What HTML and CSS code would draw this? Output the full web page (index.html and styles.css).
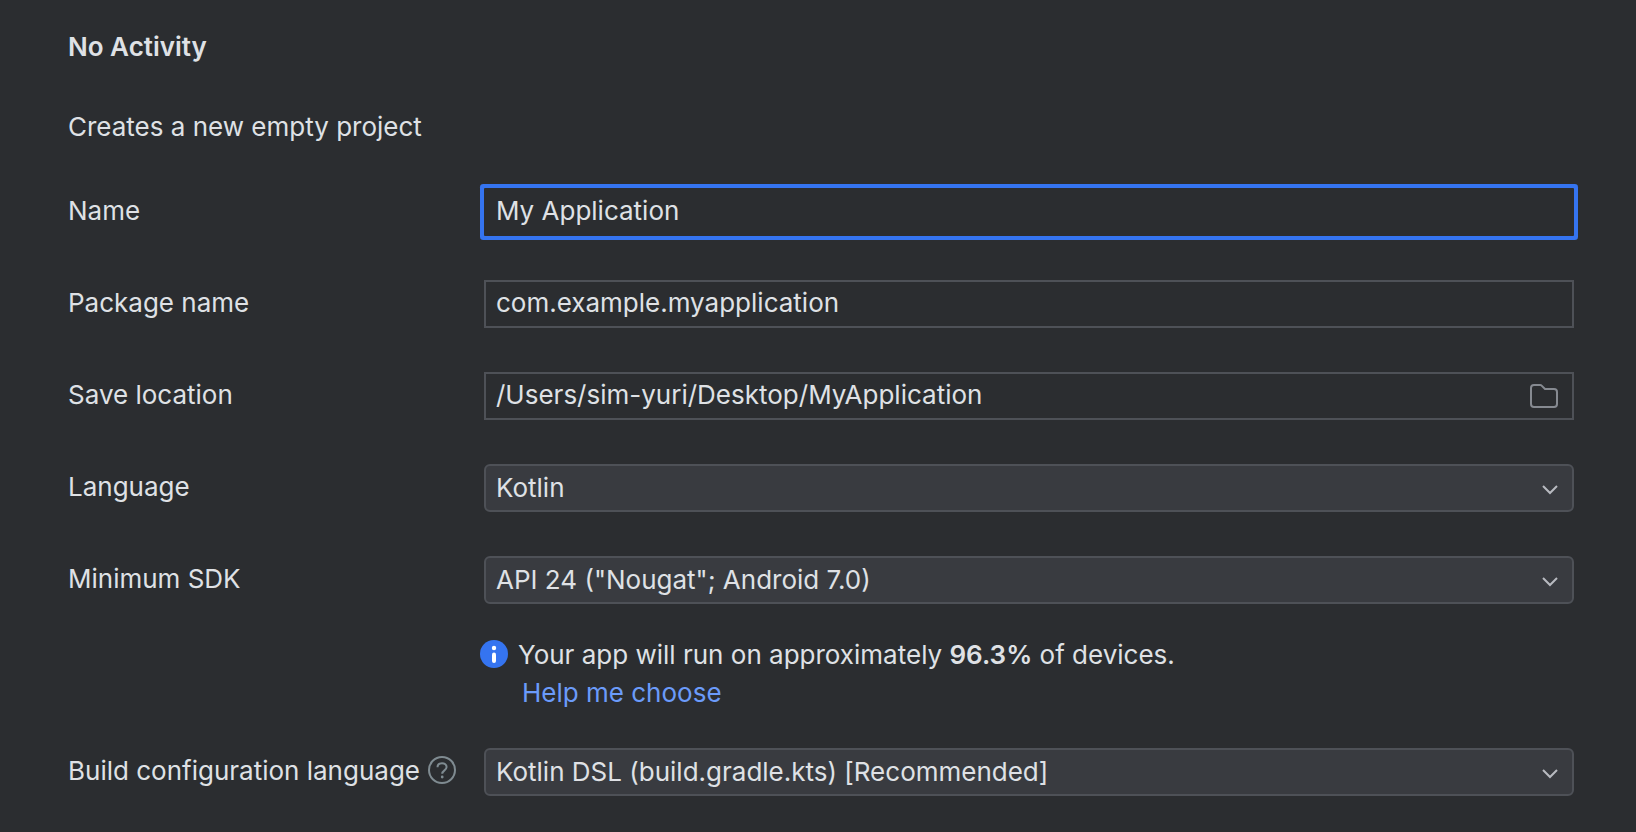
FILE: index.html
```
<!DOCTYPE html>
<html lang="en">

<head>
    <meta charset="UTF-8">
    <meta name="viewport" content="width=device-width, initial-scale=1.0">
    <title>New Project</title>
    <link rel="stylesheet" href="styles.css">
</head>

<body>
    <form class="project-form">
        <h1>No Activity</h1>
        <p class="description">Creates a new empty project</p>
        <div class="form-row">
            <label for="name">Name</label>
            <input class="field active" type="text" id="name" value="My Application" spellcheck="false">
        </div>
        <div class="form-row">
            <label for="package">Package name</label>
            <input class="field" type="text" id="package" value="com.example.myapplication" spellcheck="false">
        </div>
        <div class="form-row">
            <label for="location">Save location</label>
            <div class="control">
                <input class="field" type="text" id="location" value="/Users/sim-yuri/Desktop/MyApplication" spellcheck="false">
                <button class="browse" type="button" aria-label="Browse">
                    <svg width="28" height="24" viewBox="0 0 28 24">
                        <path d="M1 4a3 3 0 0 1 3-3h6.2a2 2 0 0 1 1.4.6L15 5h9a3 3 0 0 1 3 3v12a3 3 0 0 1-3 3H4a3 3 0 0 1-3-3z" />
                    </svg>
                </button>
            </div>
        </div>
        <div class="form-row">
            <label for="language">Language</label>
            <div class="control">
                <select class="field" id="language">
                    <option>Kotlin</option>
                    <option>Java</option>
                </select>
                <svg class="arrow" width="16" height="10" viewBox="0 0 16 10">
                    <path d="M1 1l7 7 7-7" />
                </svg>
            </div>
        </div>
        <div class="form-row">
            <label for="sdk">Minimum SDK</label>
            <div class="control">
                <select class="field" id="sdk">
                    <option>API 24 ("Nougat"; Android 7.0)</option>
                </select>
                <svg class="arrow" width="16" height="10" viewBox="0 0 16 10">
                    <path d="M1 1l7 7 7-7" />
                </svg>
            </div>
        </div>
        <div class="note">
            <svg class="info" width="28" height="28" viewBox="0 0 28 28">
                <circle cx="14" cy="14" r="14" fill="#3574f0" />
                <circle cx="14" cy="8" r="2.2" fill="#fff" />
                <rect x="12" y="12.5" width="4" height="10.5" rx="2" fill="#fff" />
            </svg>
            <div>
                <p>Your app will run on approximately <b>96.3%</b> of devices.</p>
                <a href="#">Help me choose</a>
            </div>
        </div>
        <div class="form-row">
            <div class="label-group">
                <label for="build">Build configuration language</label>
                <button class="help" type="button" aria-label="Help">
                    <svg width="28" height="28" viewBox="0 0 28 28">
                        <circle cx="14" cy="14" r="13" />
                        <path d="M9.5 11.2C9.5 8.8 11.4 7.2 14 7.2s4.6 1.6 4.6 3.9c0 3.2-4.4 3.3-4.4 6.7" />
                        <circle class="dot" cx="14.2" cy="21" r="1.4" />
                    </svg>
                </button>
            </div>
            <div class="control">
                <select class="field" id="build">
                    <option>Kotlin DSL (build.gradle.kts) [Recommended]</option>
                    <option>Groovy DSL (build.gradle)</option>
                </select>
                <svg class="arrow" width="16" height="10" viewBox="0 0 16 10">
                    <path d="M1 1l7 7 7-7" />
                </svg>
            </div>
        </div>
    </form>
</body>

</html>
```
FILE: styles.css
```
* {
    box-sizing: border-box;
}

body {
    margin: 0;
    background-color: #2b2d30;
    color: #dfe1e5;
    font-family: Inter, sans-serif;
    font-size: 26px;
    line-height: 38px;
}

.project-form {
    padding: 28px 62px 34px 68px;
}

h1 {
    margin: 0 0 42px;
    font-size: 26px;
    font-weight: 600;
}

b {
    font-weight: 600;
}

p {
    margin: 0;
}

.description {
    margin-bottom: 42px;
}

.form-row {
    display: grid;
    grid-template-columns: 416px 1fr;
    align-items: center;
    margin-bottom: 44px;
}

.form-row:last-child {
    margin-bottom: 0;
}

label {
    padding-bottom: 2px;
}

.label-group {
    display: flex;
    align-items: center;
    gap: 8px;
}

.control {
    position: relative;
}

.field {
    display: block;
    width: 100%;
    height: 48px;
    padding: 0 10px 4px;
    border: 2px solid #4e5157;
    border-radius: 0;
    background-color: #2b2d30;
    color: inherit;
    font: inherit;
    outline: none;
}

.field.active {
    border-color: transparent;
    border-radius: 1px;
    box-shadow: 0 0 0 4px #3574f0;
}

select.field {
    appearance: none;
    padding: 0 60px 0 10px;
    border-radius: 6px;
    background-color: #393b40;
}

.arrow {
    position: absolute;
    top: 21px;
    right: 16px;
    fill: none;
    stroke: #b8bac0;
    stroke-width: 2;
    pointer-events: none;
}

button {
    display: flex;
    padding: 0;
    border: none;
    background: none;
    cursor: pointer;
}

.browse {
    position: absolute;
    top: 12px;
    right: 16px;
    fill: none;
    stroke: #868a91;
    stroke-width: 2;
}

.help {
    padding-bottom: 4px;
    fill: none;
    stroke: #7f8b91;
    stroke-width: 2;
}

.help .dot {
    fill: #7f8b91;
    stroke: none;
}

.note {
    display: flex;
    gap: 10px;
    margin: -12px 0 36px 412px;
}

.info {
    flex: none;
    margin-top: 4px;
}

.note a {
    margin-left: 4px;
    color: #6b9bfa;
    text-decoration: none;
}
```
